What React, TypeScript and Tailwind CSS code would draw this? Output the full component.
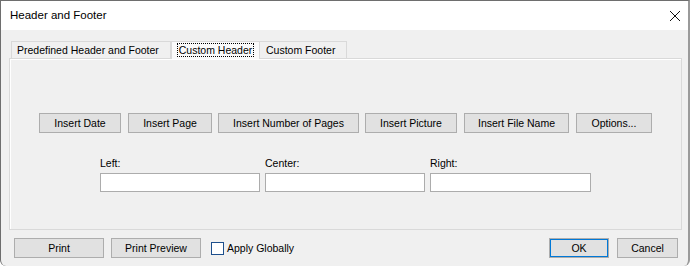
import React from "react";

const btn =
  "h-[20px] border border-[#adadad] bg-[#e1e1e1] text-[10.5px] text-black flex items-center justify-center leading-none shrink-0";

export default function App() {
  return (
    <div className="w-[692px] h-[268px] bg-white overflow-hidden" style={{ fontFamily: '"Liberation Sans", Arial, sans-serif' }}>
      <div className="w-[690px] h-[266px] border-l border-t border-r-2 border-[#6e6e6e] border-r-[#9a9a9a] bg-[#f0f0f0] flex flex-col rounded-br-[6px] rounded-bl-[6px]">
        {/* title bar */}
        <div className="h-[29px] bg-white flex items-center justify-between pl-[9px] pr-[5px] shrink-0">
          <span className="text-[11.5px] text-black">Header and Footer</span>
          <svg width="12" height="12" viewBox="0 0 12 12" className="mr-[2px]">
            <path d="M1 1 L11 11 M11 1 L1 11" stroke="#111" strokeWidth="1" />
          </svg>
        </div>
        {/* body */}
        <div className="flex flex-col pl-[8px] pr-[7px] pt-[11px]">
          {/* tabs */}
          <div className="flex items-end h-[17px] pl-[2px]">
            <div className="h-[17px] w-[160px] border border-b-0 border-[#d9d9d9] bg-[#f0f0f0] text-[10.5px] flex items-center pl-[5px] pt-[1px]">
              Predefined Header and Footer
            </div>
            <div className="h-[18px] w-[89px] border border-b-0 border-[#d9d9d9] bg-[#fafafa] text-[10.5px] flex items-center justify-center -mb-[1px] relative z-10 px-[2px] pb-[2px]">
              <span className="border border-dotted border-black px-[1px] leading-[12px]">Custom Header</span>
            </div>
            <div className="h-[17px] w-[87px] border border-b-0 border-l-0 border-[#d9d9d9] bg-[#f0f0f0] text-[10.5px] flex items-center pl-[6px] pt-[1px]">
              Custom Footer
            </div>
          </div>
          {/* panel */}
          <div className="h-[172px] w-[673px] border border-[#d9d9d9] bg-[#f0f0f0] flex flex-col" style={{ boxShadow: "inset 1px 1px 0 #fff" }}>
            <div className="flex pl-[29px] pt-[54px]">
              <div className={`${btn} w-[82px]`}>Insert Date</div>
              <div className={`${btn} w-[84px] ml-[7px]`}>Insert Page</div>
              <div className={`${btn} w-[141px] ml-[6px]`}>Insert Number of Pages</div>
              <div className={`${btn} w-[92px] ml-[6px]`}>Insert Picture</div>
              <div className={`${btn} w-[105px] ml-[7px]`}>Insert File Name</div>
              <div className={`${btn} w-[76px] ml-[7px]`}>Options...</div>
            </div>
            <div className="flex gap-[5px] pl-[90px] pt-[24px]">
              {["Left:", "Center:", "Right:"].map((l, i) => (
                <div key={l} className="flex flex-col">
                  <span className="text-[10.5px] text-black leading-[13px] h-[16px]">{l}</span>
                  <div className={`h-[19px] ${i === 2 ? "w-[161px]" : "w-[160px]"} bg-white border border-[#acacac]`} />
                </div>
              ))}
            </div>
          </div>
          {/* bottom row */}
          <div className="flex items-center mt-[8px] pl-[5px] pr-[3px]">
            <div className={`${btn} w-[90px]`}>Print</div>
            <div className={`${btn} w-[90px] ml-[7px]`}>Print Preview</div>
            <div className="ml-[10px] w-[13px] h-[13px] border border-[#1d4f8c] bg-white" />
            <span className="ml-[3px] text-[10.5px] text-black pt-[1px]">Apply Globally</span>
            <div className="flex-1" />
            <div className={`${btn} w-[60px] border-[#0078d7]`} style={{ boxShadow: "inset 0 0 0 1px #0078d7" }}>OK</div>
            <div className={`${btn} w-[61px] ml-[8px]`}>Cancel</div>
          </div>
        </div>
      </div>
    </div>
  );
}
